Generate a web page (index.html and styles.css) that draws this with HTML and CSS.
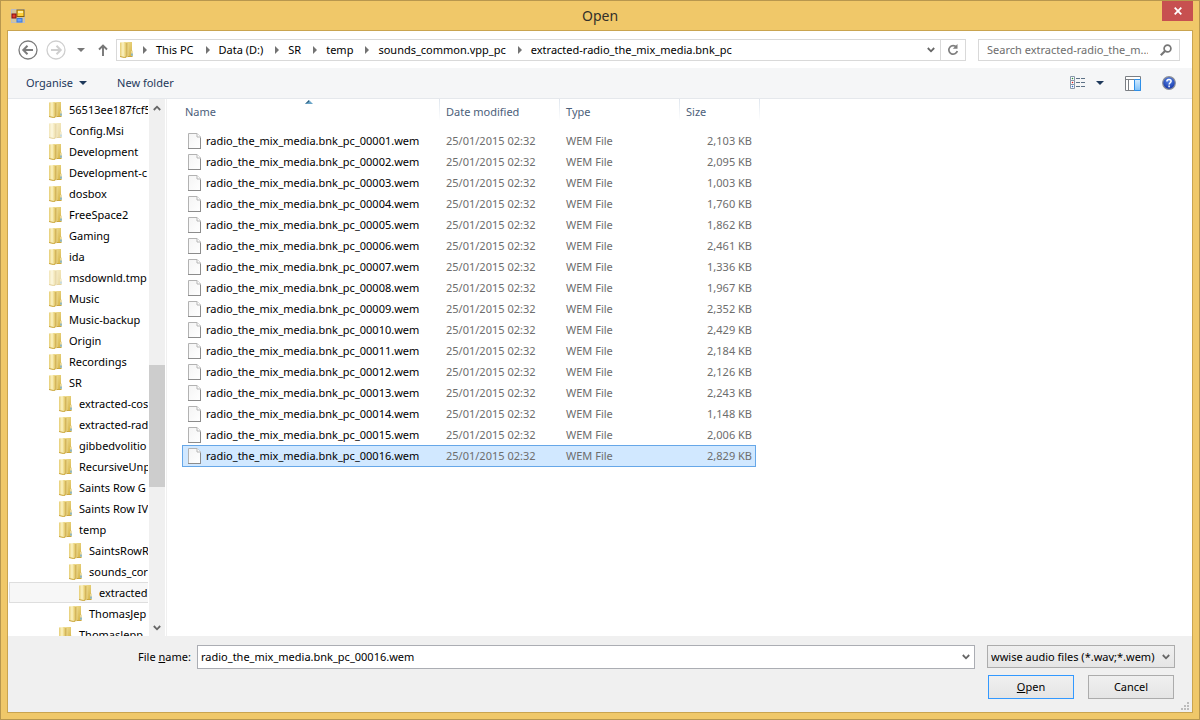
FILE: index.html
```html
<!DOCTYPE html>
<html lang="en-GB">
<head>
<meta charset="utf-8">
<title>Open</title>
<link rel="stylesheet" href="styles.css">
</head>
<body>
<svg class="defs" aria-hidden="true">
  <defs>
    <linearGradient id="gold" x1="0" x2="1" y1="0" y2="1">
      <stop offset="0" stop-color="#f3e39c"/><stop offset="1" stop-color="#d2ae3e"/>
    </linearGradient>
    <linearGradient id="gold-front" x1="0" x2="1" y1="0" y2="0">
      <stop offset="0" stop-color="#e6cd74"/><stop offset="0.5" stop-color="#fcf3c4"/><stop offset="1" stop-color="#e3c866"/>
    </linearGradient>
    <linearGradient id="gold-fold" x1="0" x2="1" y1="0" y2="0">
      <stop offset="0" stop-color="#c39d3c"/><stop offset="1" stop-color="#e9d588"/>
    </linearGradient>
    <linearGradient id="paper" x1="0" x2="1" y1="0" y2="1">
      <stop offset="0" stop-color="#f4f4f4"/><stop offset="1" stop-color="#ffffff"/>
    </linearGradient>
    <radialGradient id="help-blue" cx="0.5" cy="0.3" r="0.7">
      <stop offset="0" stop-color="#5d8be8"/><stop offset="1" stop-color="#0f2fa6"/>
    </radialGradient>
    <linearGradient id="pane-blue" x1="0" x2="0" y1="0" y2="1">
      <stop offset="0" stop-color="#d3ebff"/><stop offset="1" stop-color="#7fc0f8"/>
    </linearGradient>
    <symbol id="folder" viewBox="0 0 14 16">
      <path d="M4 0h8v8.500l1 .8v5l-1 .7H4z" fill="url(#gold)"/>
      <path d="M5 1h3.500v14L5 15.500z" fill="url(#gold-fold)"/>
      <path d="M0 .5L4.500 0 6 1v14.500L4.500 16 0 14.800z" fill="url(#gold-front)"/>
      <path d="M0 14.500l4.500 1 1.500-.5M8 14.500h4" fill="none" stroke="#c9a63f"/>
      <path d="M11.500 9h1.200v5h-1.200z" fill="#f6f0d4"/>
      <path d="M11.500 11.500h1v2.300h-1z" fill="#3f9ae0"/>
    </symbol>
    <symbol id="file" viewBox="0 0 14 16">
      <path d="M.5.5h8.500l3.500 3.500v11.500H.5z" fill="url(#paper)" stroke="#b2b2b2"/>
      <path d="M0 15.500h13M12.500 5v10" stroke="#8c8c8c"/>
      <path d="M9 .5V4h3.500" fill="#fff" stroke="#b4b4b4"/>
    </symbol>
    <symbol id="chevron" viewBox="0 0 8 6">
      <path d="M.8 1l3.200 3.300L7.200 1" fill="none" stroke="#666" stroke-width="1.800"/>
    </symbol>
    <symbol id="crumb-arrow" viewBox="0 0 4 8"><path d="M0 0l4 4-4 4z" fill="#737373"/></symbol>
    <symbol id="down-triangle" viewBox="0 0 8 4"><path d="M0 0h8L4 4z" fill="currentColor"/></symbol>
  </defs>
</svg>

<main class="window">
  <header class="titlebar">
    <svg class="app-icon" width="14" height="14" viewBox="0 0 14 14" aria-hidden="true">
      <rect width="14" height="14" fill="#d3c49c"/>
      <path d="M0 .5h14M0 13.500h14M.5 0v14M13.500 0v14" stroke="#b9bcc4"/>
      <rect x="6" y="1" width="7" height="6.500" fill="#ffd13b" stroke="#8d6200"/>
      <path d="M7 2h5v2H7z" fill="#fff0a0"/>
      <rect x="1" y="5" width="4" height="4" fill="#e03a2c" stroke="#83100c"/>
      <rect x="6" y="9.500" width="5" height="3.500" fill="#66a2ff" stroke="#3f78d4"/>
    </svg>
    <h1 class="title">Open</h1>
    <button class="close" type="button" aria-label="Close">
      <svg width="8" height="8" viewBox="0 0 8 8"><path d="M.7.7l6.600 6.600M7.300.7L.7 7.300" stroke="#fff" stroke-width="1.800"/></svg>
    </button>
  </header>

  <div class="client">
    <nav class="navbar" aria-label="Location">
      <button class="bare" type="button" aria-label="Back">
        <svg width="20" height="20" viewBox="0 0 20 20"><circle cx="10" cy="10" r="9" fill="none" stroke="#7c7c7c" stroke-width="1.300"/><path d="M5.500 10H15M9.500 5.800L5.300 10l4.200 4.200" fill="none" stroke="#7c7c7c" stroke-width="2"/></svg>
      </button>
      <button class="bare forward" type="button" aria-label="Forward">
        <svg width="20" height="20" viewBox="0 0 20 20"><circle cx="10" cy="10" r="9" fill="none" stroke="#cfcfcf" stroke-width="1.300"/><path d="M5 10h9.500M10.500 5.800l4.200 4.200-4.200 4.200" fill="none" stroke="#cfcfcf" stroke-width="2"/></svg>
      </button>
      <button class="bare recent" type="button" aria-label="Recent locations"><svg width="8" height="4"><use href="#down-triangle"/></svg></button>
      <button class="bare up" type="button" aria-label="Up">
        <svg width="10" height="12" viewBox="0 0 10 12"><path d="M5 12V1.500M1 5.500l4-4 4 4" fill="none" stroke="#777" stroke-width="1.900"/></svg>
      </button>
      <div class="address">
        <svg width="14" height="16"><use href="#folder"/></svg>
        <ol class="crumbs">
          <li><svg width="4" height="8"><use href="#crumb-arrow"/></svg><button type="button">This PC</button></li>
          <li><svg width="4" height="8"><use href="#crumb-arrow"/></svg><button type="button">Data (D:)</button></li>
          <li><svg width="4" height="8"><use href="#crumb-arrow"/></svg><button type="button">SR</button></li>
          <li><svg width="4" height="8"><use href="#crumb-arrow"/></svg><button type="button">temp</button></li>
          <li><svg width="4" height="8"><use href="#crumb-arrow"/></svg><button type="button">sounds_common.vpp_pc</button></li>
          <li><svg width="4" height="8"><use href="#crumb-arrow"/></svg><button type="button">extracted-radio_the_mix_media.bnk_pc</button></li>
        </ol>
        <button class="history" type="button" aria-label="Previous locations"><svg width="8" height="6"><use href="#chevron"/></svg></button>
        <button class="refresh" type="button" aria-label="Refresh">
          <svg width="12" height="12" viewBox="0 0 12 12"><path d="M9.500 3.200A4.300 4.300 0 1 0 10.300 7" fill="none" stroke="#7f7f7f" stroke-width="1.700"/><path d="M10.500 0v4.800H5.800z" fill="#7f7f7f"/></svg>
        </button>
      </div>
      <div class="search">
        <input type="search" aria-label="Search" placeholder="Search extracted-radio_the_m...">
        <svg width="12" height="12" viewBox="0 0 12 12" aria-hidden="true"><circle cx="7.500" cy="4.500" r="3.400" fill="none" stroke="#777" stroke-width="1.700"/><path d="M5 7L.8 11.200" stroke="#777" stroke-width="2.200"/></svg>
      </div>
    </nav>

    <div class="toolbar">
      <button class="bare organise" type="button">Organise <svg width="8" height="4"><use href="#down-triangle"/></svg></button>
      <button class="bare" type="button">New folder</button>
      <div class="tools">
        <button class="bare" type="button" aria-label="View">
          <svg width="16" height="14" viewBox="0 0 16 14">
            <path d="M.5.5h4v4h-4zM.5 4.500h4v4h-4zM.5 8.500h4v4h-4z" fill="#fff" stroke="#8797aa"/>
            <path d="M2 2h1v1H2z" fill="#2c8a3c" stroke="#2c8a3c" stroke-width=".4"/><path d="M2 6h1v1H2z" fill="#d81e1e" stroke="#d81e1e" stroke-width=".4"/><path d="M2 10h1v1H2z" fill="#2c62c8" stroke="#2c62c8" stroke-width=".4"/>
            <path d="M6 2.500h4m1 0h4M6 6.500h4m1 0h4M6 10.500h4m1 0h4" stroke="#5d7186"/>
          </svg>
        </button>
        <button class="bare view-menu" type="button" aria-label="More view options"><svg width="8" height="4"><use href="#down-triangle"/></svg></button>
        <button class="bare preview" type="button" aria-label="Preview pane">
          <svg width="16" height="15" viewBox="0 0 16 15"><path d="M.5.5h15v14H.5z" fill="#fff" stroke="#7b7f84"/><path d="M1 3.500h14M3.500 4v10" stroke="#7b7f84"/><path d="M9.500 3.500h6v11h-6z" fill="url(#pane-blue)" stroke="#2d8fe8"/></svg>
        </button>
        <button class="bare help" type="button" aria-label="Help">
          <svg width="14" height="14" viewBox="0 0 14 14"><circle cx="7" cy="7" r="6.300" fill="url(#help-blue)" stroke="#8b8f99" stroke-width="1.200"/><path d="M4.900 5.400C4.900 2.900 9.100 2.900 9.100 5.300 9.100 6.700 7.100 6.800 7.100 8.500M7.100 9.600v1.600" fill="none" stroke="#fff" stroke-width="1.500"/></svg>
        </button>
      </div>
    </div>

    <div class="body">
      <aside class="sidebar">
        <ul class="tree">
          <li><svg width="14" height="16"><use href="#folder"/></svg>56513ee187fcf5</li>
          <li class="hidden-folder"><svg width="14" height="16"><use href="#folder"/></svg>Config.Msi</li>
          <li><svg width="14" height="16"><use href="#folder"/></svg>Development</li>
          <li><svg width="14" height="16"><use href="#folder"/></svg>Development-c</li>
          <li><svg width="14" height="16"><use href="#folder"/></svg>dosbox</li>
          <li><svg width="14" height="16"><use href="#folder"/></svg>FreeSpace2</li>
          <li><svg width="14" height="16"><use href="#folder"/></svg>Gaming</li>
          <li><svg width="14" height="16"><use href="#folder"/></svg>ida</li>
          <li class="hidden-folder"><svg width="14" height="16"><use href="#folder"/></svg>msdownld.tmp</li>
          <li><svg width="14" height="16"><use href="#folder"/></svg>Music</li>
          <li><svg width="14" height="16"><use href="#folder"/></svg>Music-backup</li>
          <li><svg width="14" height="16"><use href="#folder"/></svg>Origin</li>
          <li><svg width="14" height="16"><use href="#folder"/></svg>Recordings</li>
          <li><svg width="14" height="16"><use href="#folder"/></svg>SR</li>
          <li class="level-2"><svg width="14" height="16"><use href="#folder"/></svg>extracted-cos</li>
          <li class="level-2"><svg width="14" height="16"><use href="#folder"/></svg>extracted-rad</li>
          <li class="level-2"><svg width="14" height="16"><use href="#folder"/></svg>gibbedvolitio</li>
          <li class="level-2"><svg width="14" height="16"><use href="#folder"/></svg>RecursiveUnp</li>
          <li class="level-2"><svg width="14" height="16"><use href="#folder"/></svg>Saints Row G</li>
          <li class="level-2"><svg width="14" height="16"><use href="#folder"/></svg>Saints Row IV</li>
          <li class="level-2"><svg width="14" height="16"><use href="#folder"/></svg>temp</li>
          <li class="level-3"><svg width="14" height="16"><use href="#folder"/></svg>SaintsRowR</li>
          <li class="level-3"><svg width="14" height="16"><use href="#folder"/></svg>sounds_cor</li>
          <li class="level-4 current"><svg width="14" height="16"><use href="#folder"/></svg>extracted</li>
          <li class="level-3"><svg width="14" height="16"><use href="#folder"/></svg>ThomasJep</li>
          <li class="level-2"><svg width="14" height="16"><use href="#folder"/></svg>ThomasJepp</li>
        </ul>
        <div class="scrollbar" aria-hidden="true">
          <svg class="flip" width="8" height="6"><use href="#chevron"/></svg>
          <div class="track"><div class="before"></div><div class="thumb"></div><div class="after"></div></div>
          <svg width="8" height="6"><use href="#chevron"/></svg>
        </div>
      </aside>

      <section class="listing">
        <table class="files">
          <colgroup><col class="col-name"><col class="col-date"><col class="col-type"><col class="col-size"><col class="col-edge"></colgroup>
          <thead>
            <tr><th class="sorted">Name<svg class="sort-mark" width="8" height="4" viewBox="0 0 8 4" aria-hidden="true"><path d="M0 4l4-4 4 4z" fill="#6aa5c8"/><path d="M0 4l4-4v2z" fill="#2b5878"/></svg></th><th>Date modified</th><th>Type</th><th colspan="2">Size</th></tr>
          </thead>
          <tbody>
            <tr><td><svg width="14" height="16"><use href="#file"/></svg>radio_the_mix_media.bnk_pc_00001.wem</td><td>25/01/2015 02:32</td><td>WEM File</td><td>2,103 KB</td></tr>
            <tr><td><svg width="14" height="16"><use href="#file"/></svg>radio_the_mix_media.bnk_pc_00002.wem</td><td>25/01/2015 02:32</td><td>WEM File</td><td>2,095 KB</td></tr>
            <tr><td><svg width="14" height="16"><use href="#file"/></svg>radio_the_mix_media.bnk_pc_00003.wem</td><td>25/01/2015 02:32</td><td>WEM File</td><td>1,003 KB</td></tr>
            <tr><td><svg width="14" height="16"><use href="#file"/></svg>radio_the_mix_media.bnk_pc_00004.wem</td><td>25/01/2015 02:32</td><td>WEM File</td><td>1,760 KB</td></tr>
            <tr><td><svg width="14" height="16"><use href="#file"/></svg>radio_the_mix_media.bnk_pc_00005.wem</td><td>25/01/2015 02:32</td><td>WEM File</td><td>1,862 KB</td></tr>
            <tr><td><svg width="14" height="16"><use href="#file"/></svg>radio_the_mix_media.bnk_pc_00006.wem</td><td>25/01/2015 02:32</td><td>WEM File</td><td>2,461 KB</td></tr>
            <tr><td><svg width="14" height="16"><use href="#file"/></svg>radio_the_mix_media.bnk_pc_00007.wem</td><td>25/01/2015 02:32</td><td>WEM File</td><td>1,336 KB</td></tr>
            <tr><td><svg width="14" height="16"><use href="#file"/></svg>radio_the_mix_media.bnk_pc_00008.wem</td><td>25/01/2015 02:32</td><td>WEM File</td><td>1,967 KB</td></tr>
            <tr><td><svg width="14" height="16"><use href="#file"/></svg>radio_the_mix_media.bnk_pc_00009.wem</td><td>25/01/2015 02:32</td><td>WEM File</td><td>2,352 KB</td></tr>
            <tr><td><svg width="14" height="16"><use href="#file"/></svg>radio_the_mix_media.bnk_pc_00010.wem</td><td>25/01/2015 02:32</td><td>WEM File</td><td>2,429 KB</td></tr>
            <tr><td><svg width="14" height="16"><use href="#file"/></svg>radio_the_mix_media.bnk_pc_00011.wem</td><td>25/01/2015 02:32</td><td>WEM File</td><td>2,184 KB</td></tr>
            <tr><td><svg width="14" height="16"><use href="#file"/></svg>radio_the_mix_media.bnk_pc_00012.wem</td><td>25/01/2015 02:32</td><td>WEM File</td><td>2,126 KB</td></tr>
            <tr><td><svg width="14" height="16"><use href="#file"/></svg>radio_the_mix_media.bnk_pc_00013.wem</td><td>25/01/2015 02:32</td><td>WEM File</td><td>2,243 KB</td></tr>
            <tr><td><svg width="14" height="16"><use href="#file"/></svg>radio_the_mix_media.bnk_pc_00014.wem</td><td>25/01/2015 02:32</td><td>WEM File</td><td>1,148 KB</td></tr>
            <tr><td><svg width="14" height="16"><use href="#file"/></svg>radio_the_mix_media.bnk_pc_00015.wem</td><td>25/01/2015 02:32</td><td>WEM File</td><td>2,006 KB</td></tr>
            <tr class="selected"><td><svg width="14" height="16"><use href="#file"/></svg>radio_the_mix_media.bnk_pc_00016.wem</td><td>25/01/2015 02:32</td><td>WEM File</td><td>2,829 KB</td></tr>
          </tbody>
        </table>
      </section>
    </div>

    <form class="footer">
      <div class="fields">
        <label for="file-name">File <u>n</u>ame:</label>
        <div class="combo">
          <input id="file-name" type="text" value="radio_the_mix_media.bnk_pc_00016.wem">
          <button type="button" aria-label="Show file names"><svg width="8" height="6"><use href="#chevron"/></svg></button>
        </div>
        <div class="filter">
          <select aria-label="File type"><option>wwise audio files (*.wav;*.wem)</option></select>
          <svg width="8" height="6" aria-hidden="true"><use href="#chevron"/></svg>
        </div>
      </div>
      <div class="actions">
        <button class="push default" type="button"><span><u>O</u>pen</span></button>
        <button class="push" type="button">Cancel</button>
      </div>
      <svg class="grip" width="8" height="8" viewBox="0 0 8 8" aria-hidden="true"><path d="M6 0h2v2H6zM3 3h2v2H3zM6 3h2v2H6zM0 6h2v2H0zM3 6h2v2H3zM6 6h2v2H6z" fill="#bcbcbc"/></svg>
    </form>
  </div>
</main>
</body>
</html>
```

FILE: styles.css
```css
* {
  box-sizing: border-box;
}

body {
  margin: 0;
  font: 11px/16px "Noto Sans", "Open Sans", sans-serif;
  color: #000;
}

button,
input,
select {
  font: inherit;
  color: inherit;
  margin: 0;
  padding: 0;
  border: 0;
  background: none;
}

svg {
  display: block;
  flex: none;
}

.defs {
  position: absolute;
  width: 0;
  height: 0;
}

.window {
  display: flex;
  flex-direction: column;
  height: 100vh;
  padding: 0 6px 6px;
  background: #f0c869;
  border: 1px solid #b8974e;
}

.titlebar {
  display: grid;
  grid-template-columns: 1fr auto 1fr;
  align-items: center;
  height: 29px;
  flex: none;
}

.app-icon {
  margin-left: 4px;
}

.title {
  margin: 0;
  font-size: 14px;
  line-height: 20px;
  font-weight: 400;
  color: #33302a;
}

.close {
  display: grid;
  place-items: center;
  align-self: start;
  justify-self: end;
  width: 31px;
  height: 20px;
  background: #c75050;
}

.client {
  display: flex;
  flex-direction: column;
  flex: 1;
  min-height: 0;
  border: 1px solid #c9a450;
  background: #fff;
}

.bare {
  display: flex;
  align-items: center;
}

.navbar {
  display: flex;
  align-items: center;
  flex: none;
  height: 37px;
  padding: 0 12px 0 10px;
}

.forward {
  margin-left: 8px;
}

.recent {
  margin-left: 11px;
  color: #777;
}

.up {
  margin: 0 8px 0 13px;
}

.address {
  display: flex;
  align-items: center;
  flex: 1;
  min-width: 0;
  height: 22px;
  padding-left: 3px;
  border: 1px solid #d9d9d9;
}

.crumbs {
  display: flex;
  flex: 1;
  min-width: 0;
  margin: 0;
  padding: 0;
  list-style: none;
  white-space: nowrap;
}

.crumbs li {
  display: flex;
  align-items: center;
  gap: 9px;
  padding-left: 12px;
}

.crumbs li:first-child {
  padding-left: 9px;
}

.history {
  display: grid;
  place-items: center;
  width: 18px;
  height: 20px;
}

.refresh {
  display: grid;
  place-items: center;
  width: 25px;
  height: 20px;
  border-left: 1px solid #d9d9d9;
}

.search {
  display: flex;
  align-items: center;
  width: 202px;
  height: 22px;
  margin-left: 12px;
  padding: 0 7px 0 8px;
  border: 1px solid #d9d9d9;
}

.search input {
  flex: 1;
  min-width: 0;
  outline: 0;
}

.search input::placeholder {
  color: #6d6d6d;
  opacity: 1;
}

.toolbar {
  display: flex;
  align-items: center;
  flex: none;
  height: 31px;
  padding: 0 16px 0 18px;
  background: #f5f6f7;
  border-bottom: 1px solid #e5e8ec;
  color: #1e395b;
}

.organise {
  gap: 6px;
  margin-right: 30px;
}

.tools {
  display: flex;
  align-items: center;
  margin-left: auto;
}

.view-menu {
  margin-left: 10px;
}

.preview {
  margin-left: 21px;
}

.help {
  margin-left: 21px;
}

.body {
  display: flex;
  flex: 1;
  min-height: 0;
}

.sidebar {
  display: flex;
  flex: none;
  width: 159px;
  border-right: 1px solid #f0f0f0;
}

.tree {
  flex: 1;
  min-width: 0;
  margin: 0 1px 0 0;
  padding: 0;
  overflow: hidden;
  list-style: none;
  white-space: nowrap;
}

.tree li {
  display: flex;
  align-items: center;
  gap: 6px;
  height: 21px;
  padding-left: 41px;
  overflow: hidden;
}

.tree .level-2 {
  padding-left: 51px;
}

.tree .level-3 {
  padding-left: 61px;
}

.tree .level-4 {
  padding-left: 69px;
}

.tree .current {
  margin-left: 1px;
  background: #f7f7f7;
  border: 1px solid #dedede;
  border-right: 0;
}

.hidden-folder svg {
  opacity: 0.5;
}

.scrollbar {
  display: flex;
  flex-direction: column;
  align-items: center;
  width: 16px;
  margin-right: 1px;
  padding: 6px 0 5px;
  background: #f0f0f0;
}

.flip {
  transform: rotate(180deg);
}

.track {
  display: flex;
  flex-direction: column;
  flex: 1;
  width: 100%;
}

.before {
  flex: 253;
}

.thumb {
  flex: 122;
  background: #cdcdcd;
}

.after {
  flex: 138;
}

.listing {
  flex: 1;
  min-width: 0;
  padding-left: 15px;
  overflow: hidden;
}

.files {
  width: 578px;
  table-layout: fixed;
  border-spacing: 0;
  white-space: nowrap;
}

.col-name {
  width: 258px;
}

.col-date,
.col-type {
  width: 120px;
}

.col-size {
  width: 76px;
}

.col-edge {
  width: 4px;
}

.files th {
  height: 31px;
  padding: 5px 0 0 6px;
  vertical-align: top;
  text-align: left;
  font-weight: 400;
  color: #4c607a;
  background: linear-gradient(#dfe6ee, #fff) right top / 1px 22px no-repeat;
}

.files .sorted {
  position: relative;
  padding-left: 3px;
}

.sort-mark {
  position: absolute;
  top: 1px;
  left: 50%;
  margin-left: -6px;
}

.files td {
  height: 21px;
  padding: 0 0 0 5px;
  border: 1px solid transparent;
  border-width: 1px 0;
  color: #6d6d6d;
  line-height: 16px;
}

.files td + td {
  padding-left: 6px;
}

.files td:first-child {
  display: flex;
  align-items: center;
  gap: 4px;
  border-left-width: 1px;
  color: #000;
}

.files td:nth-child(4) {
  padding-right: 3px;
  border-right-width: 1px;
  text-align: right;
}

.files .selected td {
  height: 22px;
  background: #d1e8ff;
  border-color: #66a7e8;
}

.footer {
  position: relative;
  display: flex;
  flex-direction: column;
  gap: 6px;
  flex: none;
  height: 76px;
  padding: 9px 17px 13px 130px;
  background: #f0f0f0;
}

.fields {
  display: flex;
  align-items: flex-start;
}

.fields label {
  width: 59px;
  line-height: 24px;
  white-space: nowrap;
}

.combo {
  display: flex;
  flex: 1;
  height: 24px;
  background: #fff;
  border: 1px solid #abadb3;
}

.combo input {
  flex: 1;
  min-width: 0;
  padding-left: 3px;
  outline: 0;
}

.combo button {
  display: grid;
  place-items: center;
  width: 16px;
}

.filter {
  position: relative;
  width: 188px;
  margin-left: 12px;
}

.filter select {
  display: block;
  width: 100%;
  height: 23px;
  padding: 0 17px 0 3px;
  appearance: none;
  border: 1px solid #acacac;
  border-radius: 0;
  background: linear-gradient(#f0f0f0, #e5e5e5);
}

.filter svg {
  position: absolute;
  top: 9px;
  right: 5px;
  pointer-events: none;
}

.actions {
  display: flex;
  justify-content: flex-end;
  gap: 14px;
  padding-right: 1px;
}

.push {
  width: 86px;
  height: 24px;
  border: 1px solid #acacac;
  background: linear-gradient(#f0f0f0, #e5e5e5);
}

.push.default {
  border-color: #3399ff;
}

.grip {
  position: absolute;
  right: 3px;
  bottom: 2px;
}
```
